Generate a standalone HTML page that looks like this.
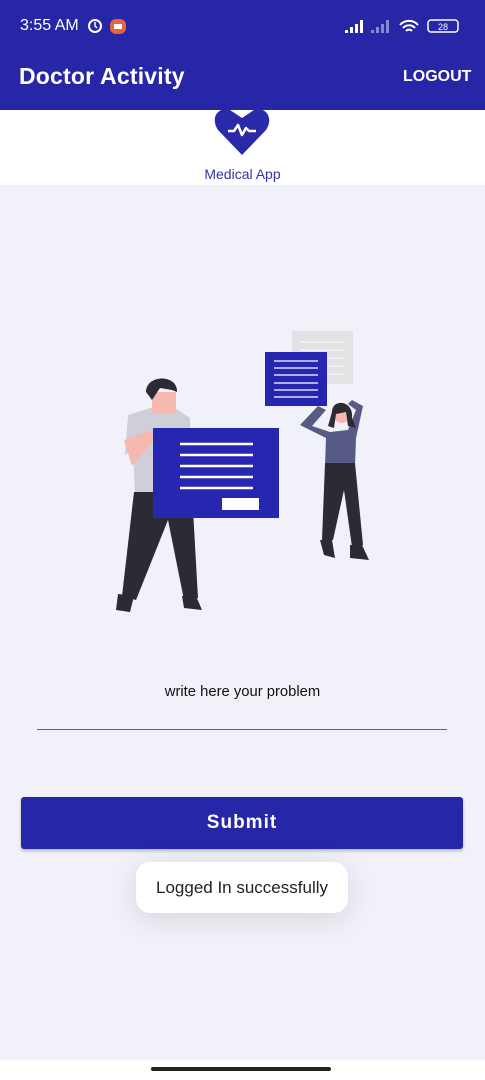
<!DOCTYPE html>
<html><head><meta charset="utf-8"><style>
*{margin:0;padding:0;box-sizing:border-box}
body{width:485px;height:1080px;background:#f1f2f9;font-family:"Liberation Sans",sans-serif;position:relative;overflow:hidden}
.abs{position:absolute}
</style></head><body>
<div class="abs" style="left:0;top:0;width:485px;height:110px;background:#2626a6"></div>
<div class="abs" style="left:20px;top:17px;color:#fff;font-size:16px">3:55 AM</div>
<svg class="abs" style="left:86px;top:16px" width="44" height="20"><circle cx="9" cy="10" r="6" fill="none" stroke="#fff" stroke-width="2"/><path d="M9 6v4l2 2" stroke="#fff" stroke-width="1.5" fill="none"/><rect x="24" y="3" width="16" height="15" rx="6" fill="#e8643a"/><rect x="28" y="8" width="8" height="5" fill="#fff"/></svg>
<svg class="abs" style="left:344px;top:17px" width="118" height="20"><g fill="#fff"><rect x="1" y="13" width="3" height="3"/><rect x="6" y="10" width="3" height="6"/><rect x="11" y="7" width="3" height="9"/><rect x="16" y="3" width="3" height="13"/></g><g fill="#8888c8"><rect x="27" y="13" width="3" height="3"/><rect x="32" y="10" width="3" height="6"/><rect x="37" y="7" width="3" height="9"/><rect x="42" y="3" width="3" height="13"/></g><path d="M56 8a12 12 0 0 1 18 0M59 11a8 8 0 0 1 12 0M62 14a4 4 0 0 1 6 0" stroke="#fff" stroke-width="2" fill="none"/><rect x="84" y="3" width="30" height="12" rx="3" fill="none" stroke="#fff" stroke-width="1.5"/><text x="99" y="13" fill="#fff" font-size="9" text-anchor="middle" font-family="Liberation Sans">28</text></svg>
<div class="abs" style="left:19px;top:63px;color:#fff;font-size:23px;font-weight:bold;letter-spacing:0.2px">Doctor Activity</div>
<div class="abs" style="left:403px;top:68px;color:#fff;font-size:16px;font-weight:bold">LOGOUT</div>
<div class="abs" style="left:0;top:110px;width:485px;height:75px;background:#fff"></div>
<svg class="abs" style="left:214px;top:108px" width="56" height="48"><path d="M28 47 L4 22 C-4 10 4 -2 16 2 L28 10 L40 2 C52 -2 60 10 52 22 Z" fill="#2a2aa8"/><path d="M14 23h6l4-6 4 10 4-7 3 3h7" stroke="#fff" stroke-width="2.5" fill="none" stroke-linejoin="round"/></svg>
<div class="abs" style="left:0;top:166px;width:485px;text-align:center;color:#3333aa;font-size:14px">Medical App</div>
<svg class="abs" style="left:0;top:0" width="485" height="1080">
<rect x="292" y="331" width="61" height="53" fill="#e3e3e6"/>
<g stroke="#f4f4f4" stroke-width="1.5"><line x1="300" y1="342" x2="345" y2="342"/><line x1="300" y1="350" x2="345" y2="350"/><line x1="300" y1="358" x2="345" y2="358"/><line x1="300" y1="366" x2="345" y2="366"/><line x1="300" y1="374" x2="345" y2="374"/></g>
<rect x="265" y="352" width="62" height="54" fill="#2626b0"/>
<g stroke="#dcdcff" stroke-width="1.5"><line x1="274" y1="361" x2="318" y2="361"/><line x1="274" y1="368" x2="318" y2="368"/><line x1="274" y1="375" x2="318" y2="375"/><line x1="274" y1="383" x2="318" y2="383"/><line x1="274" y1="390" x2="318" y2="390"/><line x1="274" y1="397" x2="318" y2="397"/></g>
<path d="M300 425 L318 406 L326 410 L312 426 L330 432 L348 430 L356 410 L348 404 L352 400 L363 406 L356 438 L355 465 L325 465 L326 438 Z" fill="#575a85"/>
<circle cx="342" cy="414" r="9" fill="#f7b8b0"/>
<path d="M332 412 C332 398 354 400 352 418 L356 428 L348 426 L346 412 L336 414 L334 428 L328 426 Z" fill="#2b2a35"/>
<path d="M325 463 L355 463 L363 545 L352 547 L344 490 L333 540 L322 540 Z" fill="#2b2a35"/>
<path d="M320 540 L332 540 L335 558 L324 555 Z M350 545 L362 545 L369 560 L350 558 Z" fill="#2b2a35"/>
<path d="M128 415 L150 408 L175 408 L190 418 L192 495 L135 495 L133 450 L125 455 Z" fill="#cfcfda"/>
<rect x="152" y="392" width="24" height="22" fill="#f7b8b0"/>
<path d="M146 392 C146 374 178 374 177 392 L172 390 L160 388 L152 400 Z" fill="#2b2a35"/>
<path d="M124 440 L150 430 L154 440 L132 466 Z" fill="#f7b8b0"/>
<path d="M134 492 L192 492 L198 598 L184 600 L168 520 L136 600 L122 596 Z" fill="#2b2a35"/>
<path d="M118 594 L134 596 L130 612 L116 610 Z M182 596 L196 596 L202 610 L184 608 Z" fill="#2b2a35"/>
<rect x="153" y="428" width="126" height="90" fill="#2626b0"/>
<g stroke="#ffffff" stroke-width="2.5"><line x1="180" y1="444" x2="253" y2="444"/><line x1="180" y1="455" x2="253" y2="455"/><line x1="180" y1="466" x2="253" y2="466"/><line x1="180" y1="477" x2="253" y2="477"/><line x1="180" y1="488" x2="253" y2="488"/></g>
<rect x="222" y="498" width="37" height="12" fill="#fff"/>
</svg>
<div class="abs" style="left:0;top:684px;width:485px;text-align:center;font-size:14.8px;color:#111">write here your problem</div>
<div class="abs" style="left:37px;top:729px;width:410px;height:1px;background:#666"></div>
<div class="abs" style="left:21px;top:797px;width:442px;height:52px;background:#2626a8;border-radius:3px;box-shadow:0 2px 3px rgba(0,0,0,.25);color:#fff;font-size:19px;font-weight:bold;text-align:center;line-height:52px;letter-spacing:1px">Submit</div>
<div class="abs" style="left:136px;top:862px;width:212px;height:51px;background:#fff;border-radius:14px;box-shadow:0 6px 30px rgba(0,0,0,.12);font-size:17px;color:#222;text-align:center;line-height:51px">Logged In successfully</div>
<div class="abs" style="left:0;top:1060px;width:485px;height:20px;background:#fff"></div>
<div class="abs" style="left:151px;top:1067px;width:180px;height:4px;border-radius:2px;background:#222"></div>
</body></html>
